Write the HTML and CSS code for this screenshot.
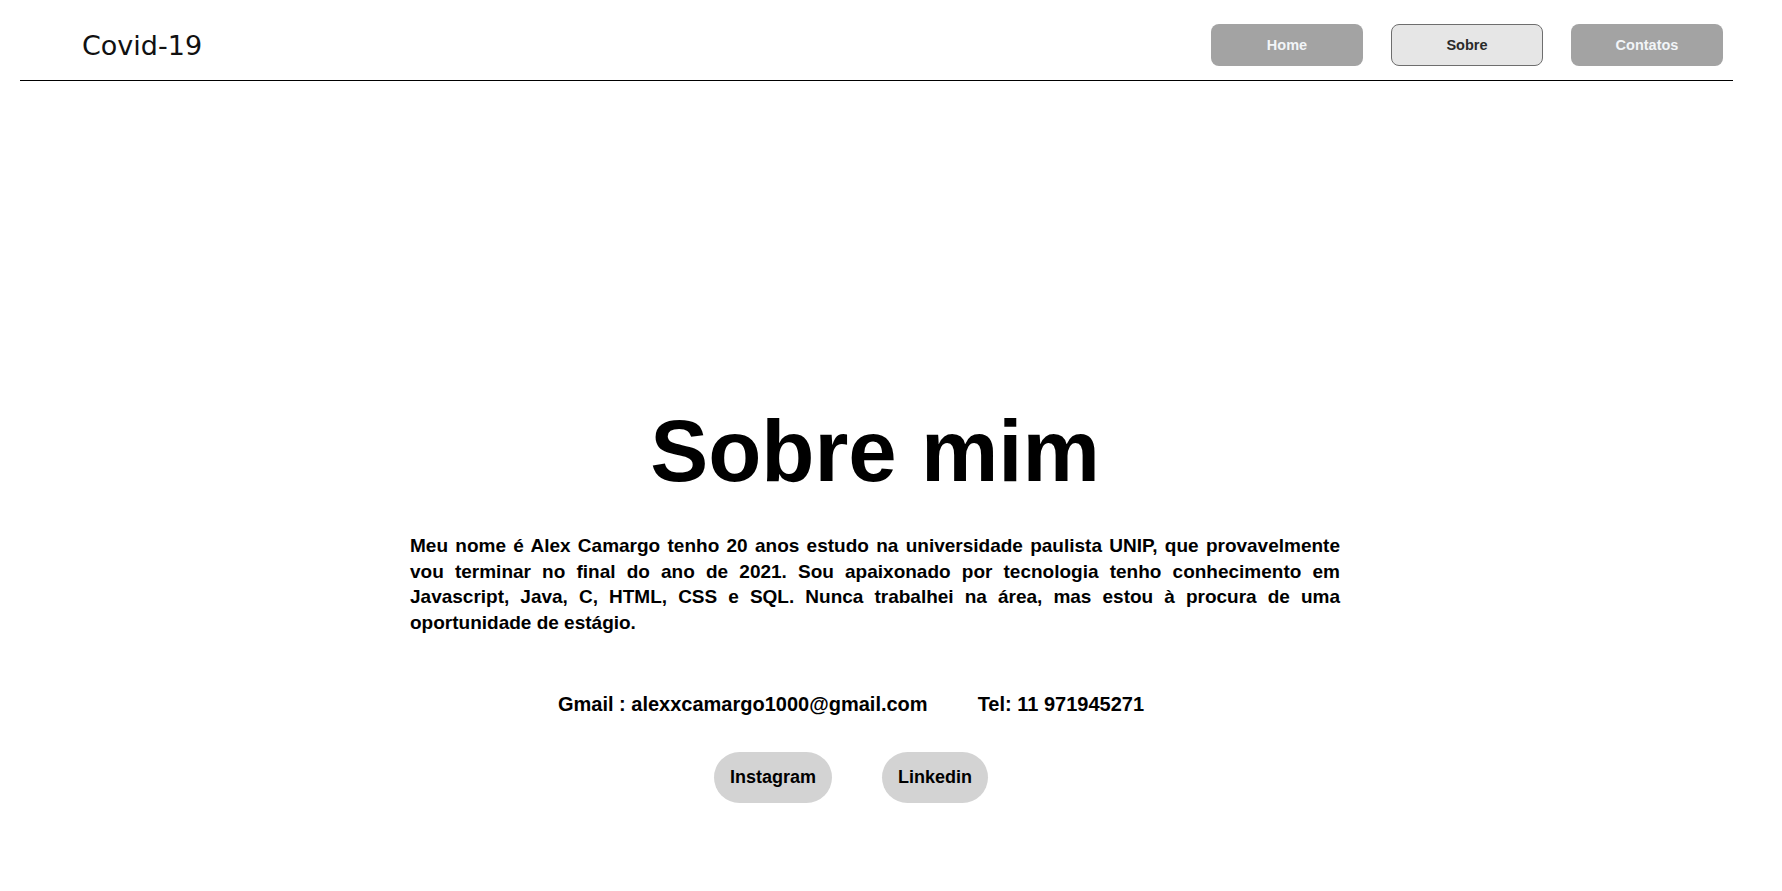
FILE: index.html
```html
<!DOCTYPE html>
<html lang="pt-BR">
<head>
<meta charset="utf-8">
<title>Sobre mim</title>
<link rel="stylesheet" href="styles.css">
</head>
<body>
  <header class="topbar">
    <div class="brand">Covid-19</div>
    <nav class="nav">
      <a class="nav-btn" href="#">Home</a>
      <a class="nav-btn nav-btn--active" href="#">Sobre</a>
      <a class="nav-btn" href="#">Contatos</a>
    </nav>
  </header>
  <main class="about">
    <h1 class="about-title">Sobre mim</h1>
    <p class="about-text">Meu nome é Alex Camargo tenho 20 anos estudo na universidade paulista UNIP, que provavelmente vou terminar no final do ano de 2021. Sou apaixonado por tecnologia tenho conhecimento em Javascript, Java, C, HTML, CSS e SQL. Nunca trabalhei na área, mas estou à procura de uma oportunidade de estágio.</p>
    <div class="contacts">
      <span class="contact">Gmail : alexxcamargo1000@gmail.com</span>
      <span class="contact">Tel: 11 971945271</span>
    </div>
    <div class="socials">
      <a class="social-btn" href="#">Instagram</a>
      <a class="social-btn" href="#">Linkedin</a>
    </div>
  </main>
</body>
</html>
```
FILE: styles.css
```css
html, body {
  background: #ffffff;
}

body {
  margin: 8px;
  font-family: "Liberation Sans", Arial, sans-serif;
  color: #000;
}

.topbar {
  margin-left: 12px;
  width: 1713px;
  box-sizing: border-box;
  display: flex;
  align-items: center;
  justify-content: space-between;
  padding: 16px 10px 14px 62px;
  border-bottom: 1px solid #000;
}

.brand {
  font-family: "DejaVu Sans", Verdana, sans-serif;
  font-size: 27px;
  color: #111;
  line-height: 32px;
  padding-top: 2px;
}

.nav {
  display: flex;
  gap: 28px;
}

.nav-btn {
  width: 152px;
  height: 42px;
  box-sizing: border-box;
  display: flex;
  align-items: center;
  justify-content: center;
  background: #a3a3a3;
  color: #f2f5f8;
  font-weight: bold;
  font-size: 14.5px;
  text-decoration: none;
  border-radius: 8px;
}

.nav-btn--active {
  background: #e6e6e6;
  color: #2a2a2a;
  border: 1px solid #6e6e6e;
}

.about {
  width: 1734px;
  display: flex;
  flex-direction: column;
  align-items: center;
}

.about-title {
  margin: 326px 0 0;
  font-size: 87px;
  line-height: 87px;
  font-weight: bold;
}

.about-text {
  margin: 39px 0 0;
  width: 930px;
  font-size: 19px;
  line-height: 25.5px;
  font-weight: bold;
  text-align: justify;
}

.contacts {
  margin-top: 58px;
  padding-right: 48px;
  display: flex;
  gap: 50px;
  font-size: 20px;
  font-weight: bold;
  line-height: 22px;
}

.socials {
  margin-top: 37px;
  padding-right: 48px;
  display: flex;
  gap: 50px;
}

.social-btn {
  height: 51px;
  padding: 0 16px;
  display: flex;
  align-items: center;
  background: #d3d3d3;
  border-radius: 26px;
  color: #000;
  font-size: 18px;
  font-weight: bold;
  text-decoration: none;
}
```
